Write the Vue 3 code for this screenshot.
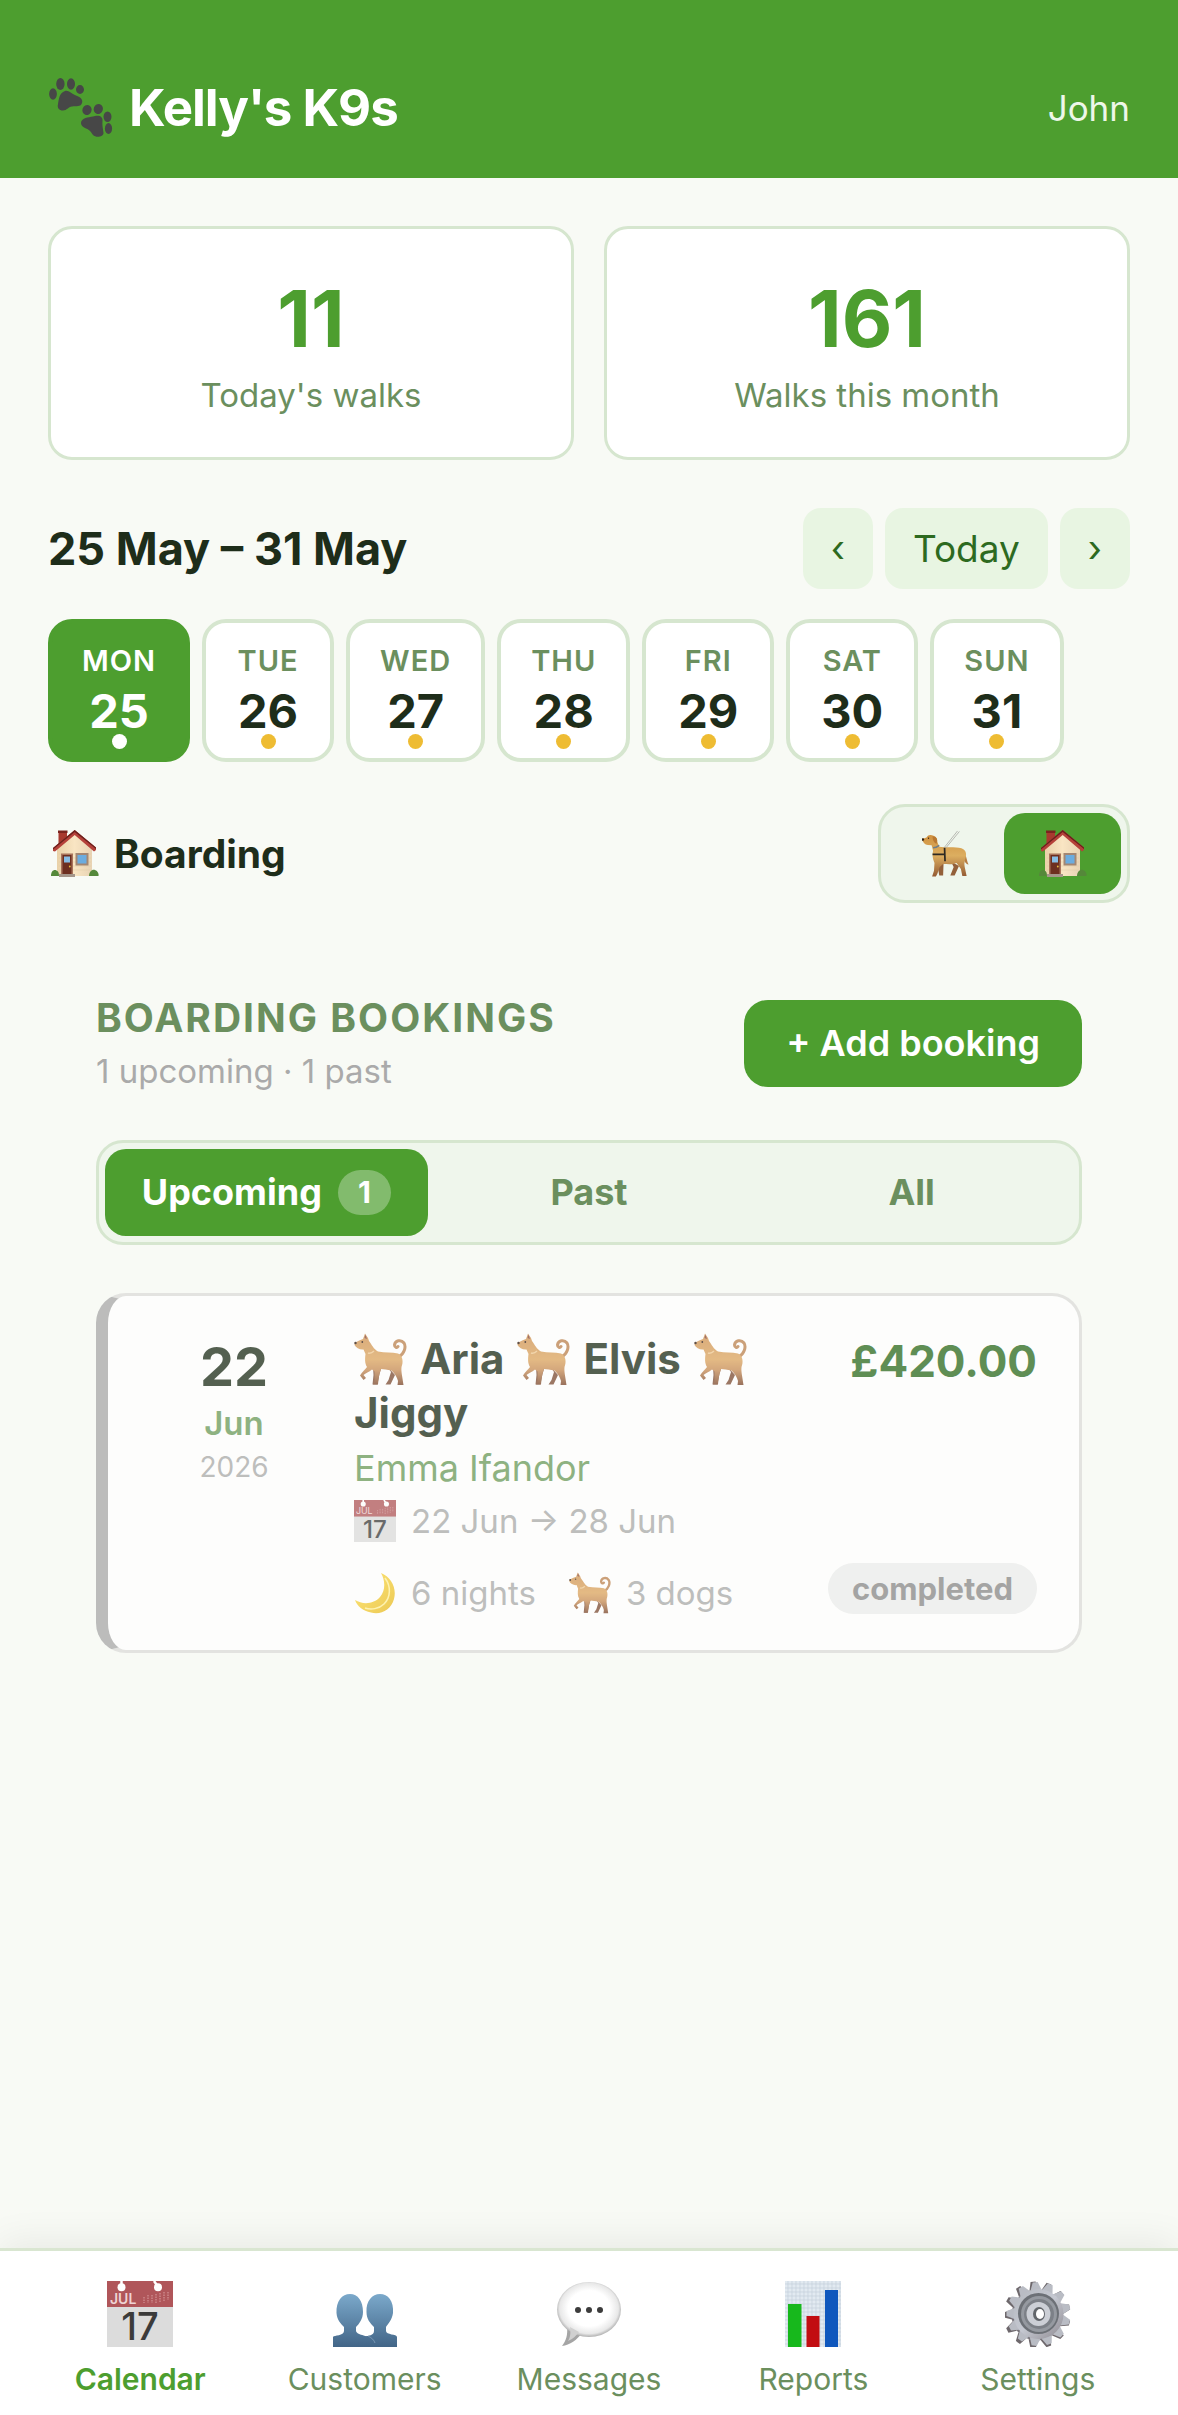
<script setup>
import { ref, computed } from 'vue'

const user = ref('John')

const stats = [
  { label: "Today's walks", value: 11 },
  { label: 'Walks this month', value: 161 }
]

const days = [
  { name: 'MON', date: 25 },
  { name: 'TUE', date: 26 },
  { name: 'WED', date: 27 },
  { name: 'THU', date: 28 },
  { name: 'FRI', date: 29 },
  { name: 'SAT', date: 30 },
  { name: 'SUN', date: 31 }
]
const selectedDay = ref(25)

const mode = ref('boarding')

const bookings = ref([
  {
    id: 1,
    day: '22',
    month: 'Jun',
    year: '2026',
    dogs: ['Aria', 'Elvis', 'Jiggy'],
    owner: 'Emma Ifandor',
    from: '22 Jun',
    to: '28 Jun',
    nights: 6,
    price: 420,
    status: 'completed'
  }
])

const tabs = [
  { id: 'upcoming', label: 'Upcoming', count: 1 },
  { id: 'past', label: 'Past' },
  { id: 'all', label: 'All' }
]
const activeTab = ref('upcoming')

const navItems = [
  { id: 'calendar', label: 'Calendar' },
  { id: 'customers', label: 'Customers' },
  { id: 'messages', label: 'Messages' },
  { id: 'reports', label: 'Reports' },
  { id: 'settings', label: 'Settings' }
]
const activePage = ref('calendar')

const summary = computed(() => `${bookings.value.length} upcoming · 1 past`)

function formatPrice(n) {
  return '£' + n.toFixed(2)
}
</script>

<template>
  <div class="app">
    <!-- shared icon shapes -->
    <svg class="sprite" width="0" height="0" aria-hidden="true">
      <defs>
        <linearGradient id="fur" x1="0" y1="0" x2="0" y2="1">
          <stop offset="0" stop-color="#cf9152" />
          <stop offset="0.5" stop-color="#dda55f" />
          <stop offset="0.7" stop-color="#c98d55" />
          <stop offset="1" stop-color="#7a452b" />
        </linearGradient>
        <linearGradient id="gold" x1="0" y1="0" x2="0" y2="1">
          <stop offset="0" stop-color="#d09240" />
          <stop offset="0.5" stop-color="#dcae60" />
          <stop offset="1" stop-color="#935a33" />
        </linearGradient>
        <linearGradient id="wall" x1="0" y1="0" x2="1" y2="0">
          <stop offset="0" stop-color="#e9d1a8" />
          <stop offset="0.5" stop-color="#f9e5c3" />
          <stop offset="1" stop-color="#e8d3b4" />
        </linearGradient>
        <linearGradient id="people" x1="0" y1="0" x2="0" y2="1">
          <stop offset="0" stop-color="#7ba9cb" />
          <stop offset="1" stop-color="#426587" />
        </linearGradient>
        <linearGradient id="moonfill" x1="0" y1="0" x2="1" y2="1">
          <stop offset="0" stop-color="#ffe04f" />
          <stop offset="1" stop-color="#e9b91f" />
        </linearGradient>
        <radialGradient id="bubble" cx="0.5" cy="0.48" r="0.54">
          <stop offset="0.6" stop-color="#ffffff" />
          <stop offset="0.85" stop-color="#e8e8e8" />
          <stop offset="1" stop-color="#9c9c9c" />
        </radialGradient>
        <linearGradient id="metal" x1="0" y1="0" x2="1" y2="1">
          <stop offset="0" stop-color="#b4b8bf" />
          <stop offset="0.5" stop-color="#c5c8d1" />
          <stop offset="1" stop-color="#8e8a91" />
        </linearGradient>

        <symbol id="paws" viewBox="0 0 64 60">
          <g fill="#474747">
            <ellipse cx="4" cy="16" rx="3.9" ry="5.8" />
            <ellipse cx="11.4" cy="6" rx="4.2" ry="5.9" />
            <ellipse cx="22" cy="6" rx="4" ry="5.7" />
            <ellipse cx="31" cy="11.5" rx="4" ry="4.4" />
            <path d="M16 13C20 12 22 16 27 17.500C32 19 34 22 33 25C32 29 27 28 23 28.500C19 29 18 32.500 14 32.500C10 32.500 8 30 9 26C10 21 10 15 16 13Z" />
            <ellipse cx="38" cy="32" rx="4.6" ry="5" transform="rotate(20 38 32)" />
            <ellipse cx="49.300" cy="31" rx="4.600" ry="5" transform="rotate(20 49.300 31)" />
            <ellipse cx="58.500" cy="38.700" rx="4" ry="5.200" />
            <ellipse cx="59.500" cy="50.500" rx="3.600" ry="5.400" />
            <path d="M46 38C51 37 54 39 53.500 43C53 47 54 51 54.500 55C54.500 59 47 60 44 57C42 54 41 52 37 50.500C33 49 31 46 32.500 43C35 39 41 39.500 46 38Z" />
          </g>
        </symbol>

        <symbol id="house" viewBox="0 0 48 48">
          <path d="M6 19L23.700 3L41 19V46H6Z" fill="url(#wall)" />
          <path d="M8 24H40M8 28H40M8 32H40M8 36H40M8 40H40" stroke="#dcc49d" stroke-width="0.400" />
          <path d="M7.500 1H16V9L7.500 17Z" fill="#a8392f" />
          <path d="M7 0.500H16.500V3H7Z" fill="#7b241f" />
          <path d="M23.700 0L2 18V21L4 21.500L23.700 5L43 21.500L45 20V17.500Z" fill="#b5413a" />
          <path d="M23.700 0L2 18V19.500L23.700 2L45 19V17.500Z" fill="#6b201c" />
          <rect x="10" y="23.500" width="12" height="21" fill="#a9745c" />
          <rect x="11.500" y="25" width="9" height="19" fill="#6d2f20" />
          <rect x="13" y="26.500" width="6" height="6" fill="#87bde5" />
          <circle cx="18.800" cy="36.500" r="0.900" fill="#e8bd42" />
          <rect x="24.500" y="23" width="13" height="12.500" fill="#a38773" />
          <rect x="26.500" y="25" width="9" height="8.500" fill="#6bacdf" />
          <rect x="8" y="44" width="16" height="3" fill="#a5968a" />
          <path d="M0 46C0 41 3 39 5.500 40.500C8 41.500 8 44 8 46Z" fill="#55883a" />
          <path d="M38 46C38 42 41 39 44 40C47 41 48 44 47.500 46Z" fill="#55883a" />
        </symbol>

        <symbol id="guide-dog" viewBox="0 0 50 49">
          <path d="M43 20C46 24 46 30 48.500 35.500C45 35 43 30 42 26Z" fill="#b77c42" />
          <path d="M15.500 33L18 47H22L22.500 33ZM30 32L33 38L29.500 47H34L38.500 37Z" fill="#93603a" />
          <path d="M0 9C1 8 4 8 5 7C6 4.500 9 4 12 5.500C15 6.500 16 9 16 12L18 17C23 18 35 17 41 18.500C46 20 47 25 45 30C44 34 44 35 44.500 38L46.500 47.500H42L40.500 40L36 34C31 36 26 35 22 35L18.500 38L16 45L14.500 48H10.500L12.500 42L13 34C11 29 10.500 25 11.500 21L10 15.500L6 15C3 15 1 13 0 9Z" fill="url(#gold)" />
          <path d="M11 6C15 6 17 9 15 14C12 12 11 10 11 6Z" fill="#b97832" />
          <circle cx="0.900" cy="9.500" r="1.300" fill="#2b1c14" />
          <circle cx="6.800" cy="8" r="0.700" fill="#2b1c14" />
          <path d="M11.500 18C14 18 16 17 18 15.500" stroke="#6d7d8a" stroke-width="1.800" fill="none" />
          <path d="M11 25H24M23.500 18L24 32" stroke="#2d2923" stroke-width="1.800" fill="none" />
          <path d="M23 18L37 0.500M25 18L39 1" stroke="#a6a6a0" stroke-width="0.800" fill="none" />
        </symbol>

        <symbol id="dog" viewBox="0 0 53 53">
          <path d="M19 33L19.500 42L18.500 51.500H23.500L25.500 41L28 33ZM33 33L37 39L34.500 47L31.500 51.500H36.500L41 42Z" fill="#7d4c34" />
          <path d="M44.500 24C50 21.500 52.500 14 50 10C47 6 41 7.500 40.500 12C40.500 14.500 43 15 44 13.500" fill="none" stroke="#bd8350" stroke-width="3" stroke-linecap="round" />
          <path d="M9 6L11 0.500L14 5L15 8C18 12 19.500 16 24 18.500C31 20 38 19 44 20.500C49 23 49.500 29 47.500 34C47 39 48.500 44 49.500 52H43.500L44 48C43 44 41 41 37.500 37.500C33 36.500 30 36.500 27 36C25 41 24.500 46 24 51.500H19L20.500 48L20.500 38.500L18 36.500C15 39 11.500 40 9.500 42L12 45L9.500 47L6 42.500C8 39 11.500 36 13 34C10.500 30 11 25 11.500 21L9.500 16.500C6 17 2 15 0.500 12L0.700 9.500C3 9 5 7 9 6Z" fill="url(#fur)" />
          <path d="M10.500 5L11.400 1.500L13 6Z" fill="#85443a" />
          <circle cx="1.500" cy="10" r="1.200" fill="#2a1712" />
          <circle cx="8.300" cy="9" r="0.900" fill="#2a1712" />
          <path d="M14 20C17 21 19 19 20 18" stroke="#f0c993" stroke-width="1.500" fill="none" />
        </symbol>

        <symbol id="calendar" viewBox="0 0 66 66">
          <rect width="66" height="66" fill="#dcdcdc" />
          <rect width="66" height="26" fill="#b0565a" />
          <path d="M14.500 0V5M47 0L50.500 5" stroke="#fff" stroke-width="2.500" />
          <circle cx="14.500" cy="6.300" r="4" fill="#fff" />
          <circle cx="51" cy="6.300" r="4" fill="#fff" />
          <path d="M37 16V22M41 14V22M45 14V22M49 13V22M53 12V22M57 11V21M61 11V19" stroke="#cb8789" stroke-width="1.500" stroke-dasharray="1.500 1" />
          <text x="3" y="22.500" font-family="Inter, sans-serif" font-size="14" fill="#eed3d4">JUL</text>
          <text x="33" y="59" text-anchor="middle" font-family="Inter, sans-serif" font-size="38" font-weight="500" fill="#3b3b3b">17</text>
        </symbol>

        <symbol id="customers" viewBox="0 0 66 66">
          <path d="M48 13C56 13 62 20 61 32C60 39 56 43 54 46V50C54 54 65 53 65 56V66H33V56C36 54 42 55 42 50V46C38 42 34.500 38 34.500 31C34 20 40 13 48 13Z" fill="url(#people)" />
          <path d="M18 13C26 13 31 20 31 31C31 38 27 43 24 46V50C25 55 38 54 41 59C43 62 43 64 43 66H1V56C2 54 12 55 12 50V46C9 43 5 39 4.500 32C4 20 10 13 18 13Z" fill="url(#people)" />
          <path d="M36 55C40 57 42 59 43 62" stroke="#83a0ba" stroke-width="0.800" fill="none" />
        </symbol>

        <symbol id="messages" viewBox="0 0 66 66">
          <path d="M11 45C12 54 10 60 6 65C14 64 21 59 26 52Z" fill="#a5a5a5" />
          <ellipse cx="33" cy="28.500" rx="32" ry="27.500" fill="url(#bubble)" />
          <path d="M14 46C15 53 14 57 12 60C17 58 20 55 23 51Z" fill="#d0d0d0" />
          <circle cx="22" cy="29" r="3" fill="#3c3c3c" />
          <circle cx="33" cy="29" r="3" fill="#3c3c3c" />
          <circle cx="44" cy="29" r="3" fill="#3c3c3c" />
        </symbol>

        <symbol id="reports" viewBox="0 0 66 66">
          <rect x="5" width="56" height="66" fill="#e2eaf1" />
          <path d="M5 3H61M5 7H61M5 11H61M5 15H61M5 19H61M5 23H61M5 27H61M5 31H61M5 35H61M5 39H61M5 43H61M5 47H61M5 51H61M5 55H61M5 59H61M5 63H61M8 0V66M12 0V66M16 0V66M20 0V66M24 0V66M28 0V66M32 0V66M36 0V66M40 0V66M44 0V66M48 0V66M52 0V66M56 0V66M60 0V66" stroke="#c4d0db" stroke-width="0.700" />
          <rect x="8" y="23" width="13.500" height="43" fill="#17b81c" />
          <rect x="26.500" y="35" width="13" height="31" fill="#c20d12" />
          <rect x="45" y="9" width="13" height="57" fill="#0f57bd" />
        </symbol>

        <symbol id="settings" viewBox="0 0 66 66">
          <path v-for="n in 13" :key="'s' + n" d="M27 9L29 0.500H34L37 9Z" fill="#6e686c" :transform="`rotate(${n * 27.7 - 6} 32 34)`" />
          <circle cx="32" cy="34" r="25.500" fill="#77737a" />
          <path v-for="n in 13" :key="'t' + n" d="M28 9L31 1H36L39 9Z" fill="#b9bcc4" :transform="`rotate(${n * 27.7 - 6} 33.500 33)`" />
          <circle cx="33.500" cy="33" r="25" fill="url(#metal)" />
          <circle cx="33.500" cy="32.500" r="20.500" fill="#6c7076" />
          <circle cx="34" cy="33" r="18" fill="#9599a0" />
          <circle cx="34" cy="33" r="15" fill="#7c8087" />
          <circle cx="33.500" cy="33" r="12" fill="#cccfd6" />
          <ellipse cx="34" cy="33" rx="6" ry="7" fill="#62666b" />
          <ellipse cx="35" cy="33" rx="4" ry="5" fill="#fff" />
        </symbol>

        <symbol id="moon" viewBox="0 0 42 42">
          <path d="M27 1C37 5 43 16 40 27C37 38 27 43 17 40.500C9 39 3 34 1 28C9 33 20 32 26 25C32 18 31 8 27 1Z" fill="url(#moonfill)" />
          <path d="M31 6C37 14 37 25 30 32C25 37 17 38 11 36" stroke="#fff09a" stroke-width="1.500" fill="none" />
        </symbol>
      </defs>
    </svg>

    <header class="topbar">
      <h1 class="brand">
        <svg class="brand-icon" aria-hidden="true"><use href="#paws" /></svg>
        Kelly's K9s
      </h1>
      <span class="user">{{ user }}</span>
    </header>

    <main class="content">
      <section class="stats">
        <div v-for="s in stats" :key="s.label" class="stat">
          <div class="stat-value">{{ s.value }}</div>
          <div class="stat-label">{{ s.label }}</div>
        </div>
      </section>

      <div class="week-head">
        <h2>25 May – 31 May</h2>
        <div class="week-nav">
          <button type="button" aria-label="Previous week">‹</button>
          <button type="button">Today</button>
          <button type="button" aria-label="Next week">›</button>
        </div>
      </div>

      <div class="days">
        <button
          v-for="d in days"
          :key="d.date"
          type="button"
          class="day"
          :class="{ active: d.date === selectedDay }"
          @click="selectedDay = d.date"
        >
          <span class="day-name">{{ d.name }}</span>
          <span class="day-date">{{ d.date }}</span>
          <span class="dot"></span>
        </button>
      </div>

      <div class="mode-row">
        <h3>
          <svg class="icon" aria-hidden="true"><use href="#house" /></svg>
          Boarding
        </h3>
        <div class="toggle">
          <button type="button" aria-label="Walks" :class="{ active: mode === 'walks' }" @click="mode = 'walks'">
            <svg class="icon" aria-hidden="true"><use href="#guide-dog" /></svg>
          </button>
          <button type="button" aria-label="Boarding" :class="{ active: mode === 'boarding' }" @click="mode = 'boarding'">
            <svg class="icon" aria-hidden="true"><use href="#house" /></svg>
          </button>
        </div>
      </div>

      <section class="bookings">
        <div class="bookings-head">
          <div>
            <h2>BOARDING BOOKINGS</h2>
            <p>{{ summary }}</p>
          </div>
          <button type="button" class="add">+ Add booking</button>
        </div>

        <div class="tabs">
          <button
            v-for="t in tabs"
            :key="t.id"
            type="button"
            :class="{ active: t.id === activeTab }"
            @click="activeTab = t.id"
          >
            {{ t.label }}
            <span v-if="t.count" class="count">{{ t.count }}</span>
          </button>
        </div>

        <article v-for="b in bookings" :key="b.id" class="booking">
          <div class="date">
            <div class="date-day">{{ b.day }}</div>
            <div class="date-month">{{ b.month }}</div>
            <div class="date-year">{{ b.year }}</div>
          </div>
          <div class="info">
            <div class="names">
              <template v-for="name in b.dogs" :key="name">
                <svg class="name-icon" aria-hidden="true"><use href="#dog" /></svg> {{ name + ' ' }}
              </template>
            </div>
            <div class="owner">{{ b.owner }}</div>
            <div class="meta">
              <svg class="meta-icon" aria-hidden="true"><use href="#calendar" /></svg>
              {{ b.from }} → {{ b.to }}
            </div>
            <div class="meta-row">
              <span class="meta">
                <svg class="meta-icon" aria-hidden="true"><use href="#moon" /></svg>
                {{ b.nights }} nights
              </span>
              <span class="meta">
                <svg class="meta-icon" aria-hidden="true"><use href="#dog" /></svg>
                {{ b.dogs.length }} dogs
              </span>
            </div>
          </div>
          <div class="side">
            <div class="price">{{ formatPrice(b.price) }}</div>
            <span class="status">{{ b.status }}</span>
          </div>
        </article>
      </section>
    </main>

    <nav class="bottom-nav">
      <a
        v-for="item in navItems"
        :key="item.id"
        :href="'#' + item.id"
        :class="{ active: item.id === activePage }"
        @click.prevent="activePage = item.id"
      >
        <svg class="nav-icon" aria-hidden="true"><use :href="'#' + item.id" /></svg>
        {{ item.label }}
      </a>
    </nav>
  </div>
</template>

<style>
body {
  background: #f8faf5;
}
</style>

<style scoped>
.app {
  min-height: 100vh;
  display: flex;
  flex-direction: column;
  background: #f8faf5;
  color: #1e2d1a;
  font-family: Inter, 'Liberation Sans', sans-serif;
}
.sprite {
  position: absolute;
}
h1,
h2,
h3,
p {
  margin: 0;
}
button {
  font-family: inherit;
  border: none;
  cursor: pointer;
}

/* header */
.topbar {
  display: flex;
  align-items: center;
  justify-content: space-between;
  padding: 75px 48px 37px;
  background: #4d9e2f;
  color: #fff;
}
.brand {
  display: flex;
  align-items: center;
  gap: 15px;
  font-size: 51px;
  line-height: 66px;
  font-weight: 700;
  letter-spacing: -1px;
}
.brand-icon {
  width: 66px;
  height: 60px;
}
.user {
  font-size: 35px;
  color: #edf7e9;
}

.content {
  flex: 1;
  padding: 48px;
}

/* stats */
.stats {
  display: grid;
  grid-template-columns: 1fr 1fr;
  gap: 30px;
}
.stat {
  padding: 45px 24px 41px;
  border: 3px solid #d6e6cf;
  border-radius: 24px;
  background: #fff;
  text-align: center;
}
.stat-value {
  font-size: 78px;
  line-height: 90px;
  font-weight: 700;
  color: #4d9e2f;
}
.stat-label {
  margin-top: 10px;
  font-size: 33px;
  line-height: 42px;
  color: #6b8f5e;
}

/* week */
.week-head {
  display: flex;
  align-items: center;
  justify-content: space-between;
  margin-top: 48px;
}
.week-head h2 {
  font-size: 45px;
  font-weight: 700;
}
.week-nav {
  display: flex;
  gap: 12px;
}
.week-nav button {
  min-width: 70px;
  padding: 18px 28px;
  border-radius: 18px;
  background: #e8f5e2;
  color: #2d6a1f;
  font-size: 37px;
  line-height: 45px;
}
.days {
  display: flex;
  gap: 12px;
  margin-top: 30px;
}
.day {
  position: relative;
  display: flex;
  flex-direction: column;
  align-items: center;
  gap: 8px;
  min-width: 132px;
  padding: 20px 30px 23px;
  border: 4px solid #d6e6cf;
  border-radius: 24px;
  background: #fff;
  color: #1e2d1a;
}
.day-name {
  font-size: 29px;
  line-height: 36px;
  font-weight: 600;
  letter-spacing: 1px;
  color: #6b8f5e;
}
.day-date {
  font-size: 47px;
  line-height: 48px;
  font-weight: 700;
}
.dot {
  position: absolute;
  bottom: 9px;
  width: 15px;
  height: 15px;
  border-radius: 50%;
  background: #eebc33;
}
.day.active {
  border-color: #4d9e2f;
  background: #4d9e2f;
  color: #fff;
}
.day.active .day-name {
  color: #fff;
}
.day.active .dot {
  background: #fff;
}

/* walks / boarding switch */
.icon {
  display: block;
  width: 48px;
  height: 48px;
}
.mode-row {
  display: flex;
  align-items: center;
  justify-content: space-between;
  margin-top: 42px;
}
.mode-row h3 {
  display: flex;
  align-items: center;
  gap: 15px;
  padding-left: 3px;
  font-size: 39px;
  font-weight: 700;
}
.toggle {
  display: flex;
  padding: 6px;
  border: 3px solid #d6e6cf;
  border-radius: 27px;
  background: #eff6ec;
}
.toggle button {
  display: flex;
  align-items: center;
  justify-content: center;
  width: 117px;
  height: 81px;
  padding: 0;
  border-radius: 21px;
  background: none;
}
.toggle .active {
  background: #4d9e2f;
}

/* bookings */
.bookings {
  margin: 91px 48px 0;
}
.bookings-head {
  display: flex;
  align-items: center;
  justify-content: space-between;
}
.bookings-head h2 {
  font-size: 39px;
  line-height: 48px;
  font-weight: 700;
  letter-spacing: 2px;
  color: #6b8f5e;
}
.bookings-head p {
  margin-top: 8px;
  font-size: 33px;
  line-height: 42px;
  color: #aaa;
}
.add {
  padding: 21px 42px;
  border-radius: 24px;
  background: #4d9e2f;
  color: #fff;
  font-size: 36px;
  line-height: 45px;
  font-weight: 600;
}
.tabs {
  display: grid;
  grid-template-columns: repeat(3, 1fr);
  margin-top: 48px;
  padding: 6px;
  border: 3px solid #d6e6cf;
  border-radius: 27px;
  background: #eff6ec;
}
.tabs button {
  display: flex;
  align-items: center;
  justify-content: center;
  gap: 16px;
  padding: 21px 0;
  border-radius: 21px;
  background: none;
  color: #6b8f5e;
  font-size: 36px;
  line-height: 45px;
  font-weight: 700;
}
.tabs .active {
  background: #4d9e2f;
  color: #fff;
}
.count {
  padding: 0 20px;
  border-radius: 24px;
  background: rgba(255, 255, 255, 0.3);
  font-size: 30px;
}

.booking {
  display: flex;
  gap: 36px;
  margin-top: 48px;
  padding: 36px 42px;
  border: 3px solid #dcdcda;
  border-left: 12px solid #a8a8a8;
  border-radius: 30px;
  background: #fff;
  opacity: 0.75;
}
.date {
  width: 168px;
  text-align: center;
}
.date-day {
  font-size: 54px;
  line-height: 70px;
  font-weight: 700;
}
.date-month {
  font-size: 33px;
  line-height: 42px;
  font-weight: 600;
  color: #6b9a5b;
}
.date-year {
  margin-top: 2px;
  font-size: 28px;
  line-height: 42px;
  color: #aaa;
}
.info {
  flex: 1;
}
.names {
  font-size: 42px;
  line-height: 54px;
  font-weight: 700;
}
.name-icon {
  width: 53px;
  height: 53px;
  margin: 0 3px;
  vertical-align: -12px;
}
.name-icon:first-child {
  margin-left: 0;
}
.owner {
  margin-top: 3px;
  font-size: 36px;
  line-height: 51px;
  color: #6b9a5b;
}
.meta {
  display: flex;
  align-items: center;
  gap: 15px;
  margin-top: 3px;
  font-size: 33px;
  line-height: 48px;
  color: #aaa;
}
.meta-icon {
  width: 42px;
  height: 42px;
}
.meta-row {
  display: flex;
  gap: 33px;
  margin-top: 27px;
}
.meta-row .meta {
  margin-top: 0;
  line-height: 42px;
}
.side {
  display: flex;
  flex-direction: column;
  align-items: flex-end;
  justify-content: space-between;
}
.price {
  font-size: 44px;
  line-height: 58px;
  font-weight: 700;
  color: #2d6a1f;
}
.status {
  padding: 0 24px;
  border-radius: 26px;
  background: #ededed;
  color: #888;
  font-size: 31px;
  line-height: 51px;
  font-weight: 700;
}

/* bottom navigation */
.bottom-nav {
  position: sticky;
  bottom: 0;
  display: grid;
  grid-template-columns: repeat(5, 1fr);
  padding: 30px 28px 18px;
  border-top: 3px solid #d9e6d1;
  background: #fff;
  box-shadow: 0 -6px 36px rgba(0, 0, 0, 0.07);
}
.bottom-nav a {
  display: flex;
  flex-direction: column;
  align-items: center;
  gap: 14px;
  font-size: 30px;
  line-height: 36px;
  color: #6b8f5e;
  text-decoration: none;
}
.bottom-nav .active {
  font-weight: 600;
  color: #4d9e2f;
}
.nav-icon {
  width: 66px;
  height: 66px;
}
</style>
